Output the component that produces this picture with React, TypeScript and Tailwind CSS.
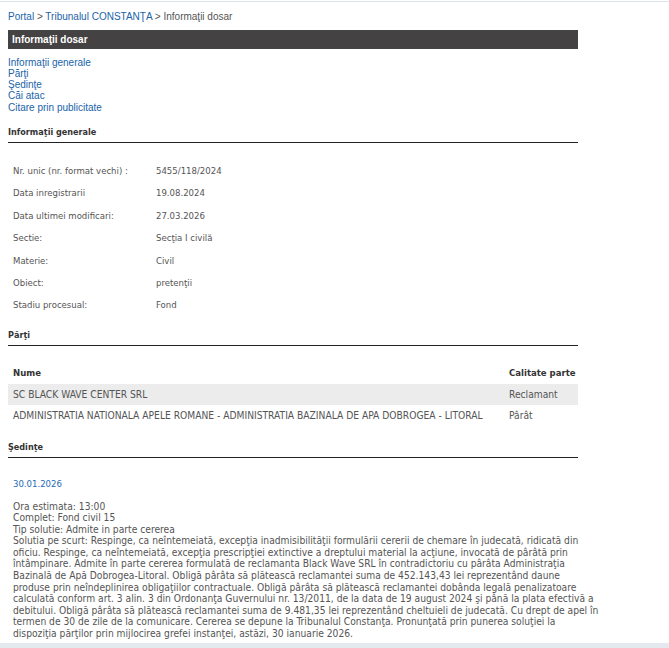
import React from "react";

const T = "font-['DejaVu_Sans_Condensed','DejaVu_Sans',sans-serif]";
const A = "font-['Liberation_Sans',Arial,sans-serif]";

const info: [string, string][] = [
  ["Nr. unic (nr. format vechi) :", "5455/118/2024"],
  ["Data inregistrarii", "19.08.2024"],
  ["Data ultimei modificari:", "27.03.2026"],
  ["Sectie:", "Secţia I civilă"],
  ["Materie:", "Civil"],
  ["Obiect:", "pretenţii"],
  ["Stadiu procesual:", "Fond"],
];

const lines = [
  "Ora estimata: 13:00",
  "Complet: Fond civil 15",
  "Tip solutie: Admite in parte cererea",
  "Solutia pe scurt: Respinge, ca neîntemeiată, excepţia inadmisibilităţii formulării cererii de chemare în judecată, ridicată din",
  "oficiu. Respinge, ca neîntemeiată, excepţia prescripţiei extinctive a dreptului material la acţiune, invocată de pârâtă prin",
  "întâmpinare. Admite în parte cererea formulată de reclamanta Black Wave SRL în contradictoriu cu pârâta Administraţia",
  "Bazinală de Apă Dobrogea-Litoral. Obligă pârâta să plătească reclamantei suma de 452.143,43 lei reprezentând daune",
  "produse prin neîndeplinirea obligaţiilor contractuale. Obligă pârâta să plătească reclamantei dobânda legală penalizatoare",
  "calculată conform art. 3 alin. 3 din Ordonanţa Guvernului nr. 13/2011, de la data de 19 august 2024 şi până la plata efectivă a",
  "debitului. Obligă pârâta să plătească reclamantei suma de 9.481,35 lei reprezentând cheltuieli de judecată. Cu drept de apel în",
  "termen de 30 de zile de la comunicare. Cererea se depune la Tribunalul Constanţa. Pronunţată prin punerea soluţiei la",
  "dispoziţia părţilor prin mijlocirea grefei instanţei, astăzi, 30 ianuarie 2026.",
];

function SectionHeader({ children, className = "" }: { children: React.ReactNode; className?: string }) {
  return (
    <div className={`${T} ${className} text-[9px] font-bold leading-[12px] text-[#333] pb-[4px] border-b border-[#222]`}>
      {children}
    </div>
  );
}

export default function App() {
  return (
    <div className="relative min-h-[648px] bg-white overflow-hidden">
      <div className="mt-[1px] h-[1px] bg-[#dae4ee]" />
      <div className="ml-[8px] w-[570px]">
        <div className={`${A} mt-[9px] text-[10px] leading-[12px] text-[#555]`}>
          <span className="text-[#2064a8]">Portal</span> &gt;{" "}
          <span className="text-[#2064a8]">Tribunalul CONSTANŢA</span> &gt; Informaţii dosar
        </div>
        <div className={`${A} mt-[7px] h-[19px] bg-[#444242] px-[4px] text-[10px] font-bold leading-[19px] text-white`}>
          Informaţii dosar
        </div>
        <div className={`${A} mt-[8px] flex flex-col text-[10px] leading-[11px] text-[#2064a8]`}>
          <span>Informaţii generale</span>
          <span>Părţi</span>
          <span>Şedinţe</span>
          <span>Căi atac</span>
          <span className="mt-[1px]">Citare prin publicitate</span>
        </div>

        <SectionHeader className="mt-[13px]">Informaţii generale</SectionHeader>
        <div className={`${T} mt-[17px] text-[9.5px] text-[#555]`}>
          {info.map(([k, v]) => (
            <div key={k} className="flex h-[22.4px] items-center">
              <span className="w-[148px] pl-[5px]">{k}</span>
              <span>{v}</span>
            </div>
          ))}
        </div>

        <SectionHeader className="mt-[12px]">Părţi</SectionHeader>
        <div className={`${T} mt-[16px] text-[10.2px] text-[#555]`}>
          <div className="flex h-[22px] items-center font-bold text-[#333] text-[9.5px]">
            <span className="flex-1 pl-[5px]">Nume</span>
            <span className="w-[69px] whitespace-nowrap">Calitate parte</span>
          </div>
          <div className="flex h-[21px] items-center bg-[#ececec]">
            <span className="flex-1 pl-[5px] whitespace-nowrap">SC BLACK WAVE CENTER SRL</span>
            <span className="w-[69px]">Reclamant</span>
          </div>
          <div className="flex h-[22px] items-center">
            <span className="flex-1 pl-[5px] whitespace-nowrap">ADMINISTRATIA NATIONALA APELE ROMANE - ADMINISTRATIA BAZINALA DE APA DOBROGEA - LITORAL</span>
            <span className="w-[69px]">Pârât</span>
          </div>
        </div>

        <SectionHeader className="mt-[14px]">Şedinţe</SectionHeader>
        <div className={`${T} mt-[20px] pl-[5px] text-[9.5px] leading-[12px] text-[#1e6bb8]`}>30.01.2026</div>
        <div className={`${T} mt-[11px] pl-[5px] text-[10.2px] leading-[11.55px] text-[#555]`}>
          {lines.map((l) => (
            <div key={l} className="whitespace-nowrap">{l}</div>
          ))}
        </div>
      </div>
      <div className="fixed bottom-0 left-0 right-0 h-[5px] bg-[#e4e8ef]" />
    </div>
  );
}
